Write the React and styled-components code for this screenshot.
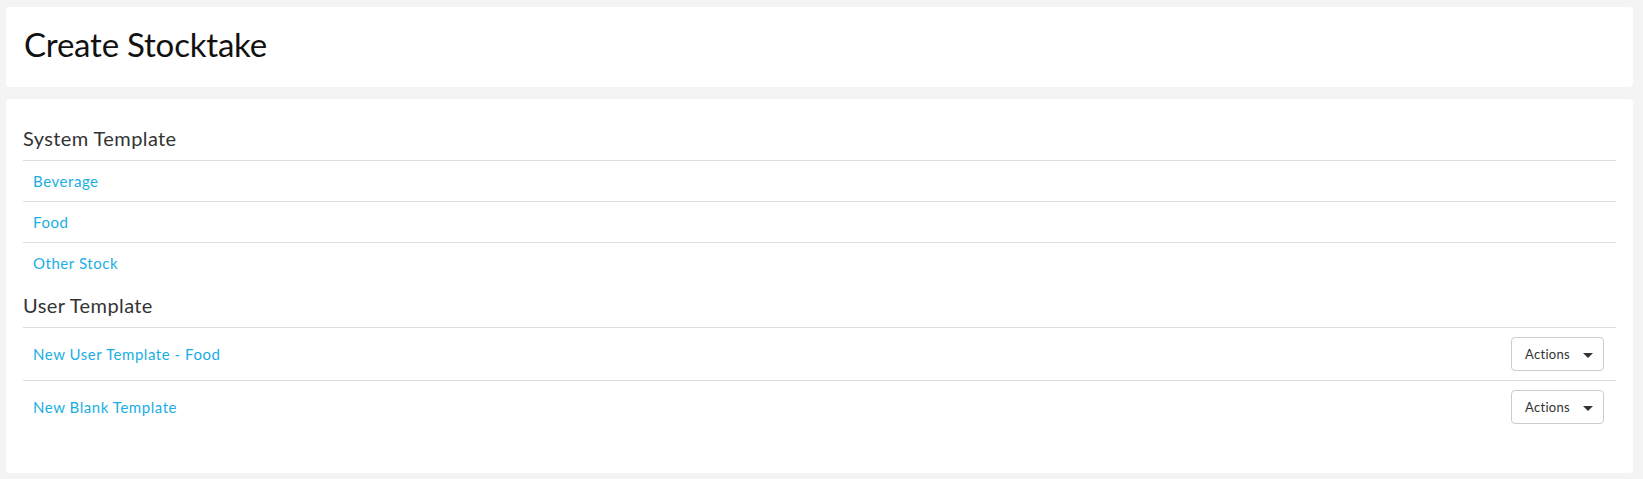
import React from "react";
import styled, { createGlobalStyle } from "styled-components";

const Global = createGlobalStyle`
  html, body { margin: 0; padding: 0; }
  body {
    background: #f4f4f4;
    font-family: Lato, "Noto Sans", "Liberation Sans", sans-serif;
    -webkit-font-smoothing: antialiased;
  }
`;

const Page = styled.div`
  display: flex;
  flex-direction: column;
  gap: 12px;
  padding: 7px 10px 6px 6px;
`;

const Card = styled.div`
  background: #ffffff;
  border-radius: 4px;
`;

const HeaderCard = styled(Card)`
  height: 80px;
  box-sizing: border-box;
  padding: 0 18px 6px;
`;

const Title = styled.h1`
  margin: 0;
  font-size: 33px;
  font-weight: 400;
  line-height: 74px;
  letter-spacing: -0.2px;
  color: #111;
`;

const BodyCard = styled(Card)`
  padding: 17px 17px 40px;
`;

const SectionTitle = styled.h4`
  margin: 0;
  font-size: 20px;
  font-weight: 400;
  line-height: 44px;
  letter-spacing: 0.4px;
  color: #333;
`;

const List = styled.div`
  display: flex;
  flex-direction: column;
`;

const Row = styled.div`
  display: flex;
  align-items: center;
  justify-content: space-between;
  border-top: 1px solid #dddddd;
  height: ${(p) => (p.$tall ? 52 : 40)}px;
  padding: 0 12px 0 10px;
`;

const Link = styled.a`
  font-size: 15px;
  color: #1aaee2;
  text-decoration: none;
  letter-spacing: 0.55px;
  line-height: ${(p) => (p.$tall ? 52 : 40)}px;
  cursor: pointer;
`;

const ActionsButton = styled.button`
  display: flex;
  align-items: center;
  justify-content: space-between;
  width: 93px;
  height: 34px;
  box-sizing: border-box;
  padding: 0 10px 0 13px;
  background: #fff;
  border: 1px solid #cccccc;
  border-radius: 4px;
  font-family: inherit;
  font-size: 13px;
  letter-spacing: 0.3px;
  color: #333;
  cursor: pointer;
`;

const Caret = styled.span`
  width: 0;
  height: 0;
  border-left: 5px solid transparent;
  border-right: 5px solid transparent;
  border-top: 5px solid #333;
  margin-top: 2px;
`;

const systemTemplates = ["Beverage", "Food", "Other Stock"];
const userTemplates = ["New User Template - Food", "New Blank Template"];

export default function App() {
  return (
    <>
      <Global />
      <Page>
        <HeaderCard>
          <Title>Create Stocktake</Title>
        </HeaderCard>
        <BodyCard>
          <SectionTitle>System Template</SectionTitle>
          <List>
            {systemTemplates.map((t) => (
              <Row key={t}>
                <Link>{t}</Link>
              </Row>
            ))}
          </List>
          <SectionTitle>User Template</SectionTitle>
          <List>
            {userTemplates.map((t) => (
              <Row key={t} $tall>
                <Link $tall>{t}</Link>
                <ActionsButton>
                  Actions
                  <Caret />
                </ActionsButton>
              </Row>
            ))}
          </List>
        </BodyCard>
      </Page>
    </>
  );
}
